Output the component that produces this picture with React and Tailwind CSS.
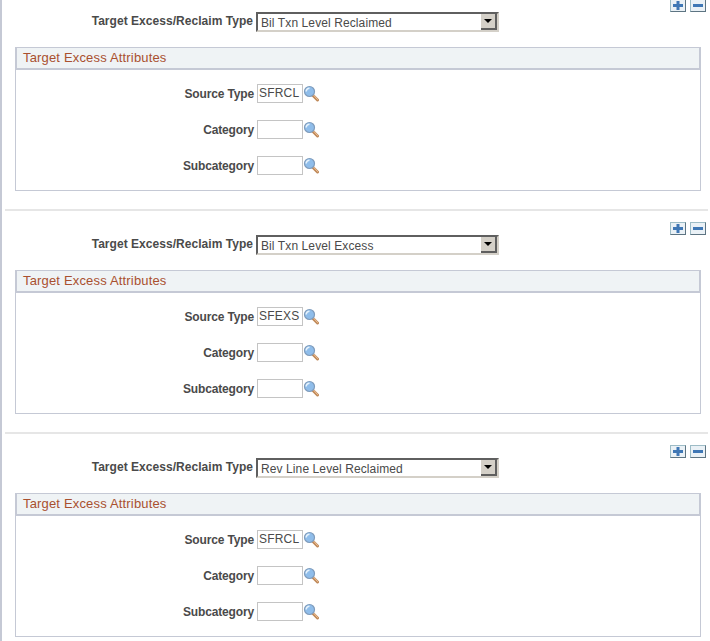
import React from 'react';

const sections = [
    { type: 'Bil Txn Level Reclaimed', source: 'SFRCL' },
    { type: 'Bil Txn Level Excess', source: 'SFEXS' },
    { type: 'Rev Line Level Reclaimed', source: 'SFRCL' },
];

const Lookup = () => (
    <svg width="16" height="17" viewBox="0 0 16 17" className="shrink-0">
        <path d="M10 10.5 L14.5 15" stroke="#c08a5a" strokeWidth="3" strokeLinecap="round" />
        <path d="M10.5 10 L14.5 14.5" stroke="#f0c49a" strokeWidth="1" strokeLinecap="round" />
        <circle cx="6.5" cy="6.5" r="5" fill="#8fbdea" stroke="#7f9cbc" strokeWidth="1.2" />
        <path d="M3.2 6.5 A3.3 3.3 0 0 1 6.5 3.2" fill="none" stroke="#e6f2fc" strokeWidth="1.6" />
    </svg>
);

const RowButton = ({ minus }) => (
    <div className="w-[16px] h-[13px] flex items-center justify-center bg-[#eaf1f6] border border-[#9dbcc6] border-r-[#5d7482] border-b-[#5d7482]">
        <svg width="12" height="11" viewBox="0 0 12 11">
            {!minus && <rect x="4.5" y="1" width="3" height="9" fill="#3f77b5" />}
            <rect x="1" y="4" width="10" height="3" fill="#3f77b5" />
        </svg>
    </div>
);

const Field = ({ label, value }) => (
    <div className="flex items-center h-[19px]">
        <span className="w-[241px] text-right font-bold text-[12px] tracking-[-0.15px] text-[#4a4a4a] pr-[3px]">{label}</span>
        <div className="w-[46px] h-[19px] border border-[#c4c4c4] bg-white text-[12px] text-[#4a4a4a] leading-[17px] pl-[1px] tracking-[0.2px] overflow-hidden">
            {value}
        </div>
        <Lookup />
    </div>
);

const Section = ({ type, source, last }) => (
    <div className={last ? 'pt-[10px]' : 'pt-[10px] pb-[18px]'}>
        <div className="flex justify-end items-end gap-[4px] pr-[2px] h-[14px]">
            <RowButton />
            <RowButton minus />
        </div>
        <div className="flex items-center h-[20px]">
            <span className="w-[251px] text-right font-bold text-[12px] tracking-[0.04px] text-[#4a4a4a] pr-[3px] -mt-[2px]">Target Excess/Reclaim Type</span>
            <div className="w-[243px] h-[20px] flex border-2 border-[#5f5f5f] border-r-[#d4d0c8] border-b-[#d4d0c8] bg-white">
                <span className="flex-1 text-[12px] leading-[18px] pl-[3px] text-[#4a4a4a] tracking-[0.1px]">{type}</span>
                <div className="w-[16px] h-[16px] bg-[#d4d0c8] border-r-2 border-b-2 border-[#5f5f5f] flex items-center justify-center">
                    <div className="w-0 h-0 border-x-[4px] border-x-transparent border-t-[4px] border-t-black" />
                </div>
            </div>
        </div>
        <div className="ml-[10px] mr-[7px] mt-[15px] h-[144px] border border-[#c5c9d5]">
            <div className="h-[22px] bg-[#eff3f5] border-b-2 border-l border-r-2 border-[#c5c9d5] -mr-[1px] pl-[6px] text-[13px] leading-[19px] text-[#a9502f] tracking-[0.17px]">
                Target Excess Attributes
            </div>
            <div className="flex flex-col gap-[17px] pt-[14px]">
                <Field label="Source Type" value={source} />
                <Field label="Category" />
                <Field label="Subcategory" />
            </div>
        </div>
    </div>
);

const App = () => (
    <div className="w-[710px] h-[641px] overflow-hidden bg-white" style={{ fontFamily: '"Liberation Sans", Arial, sans-serif' }}>
        <div className="-mt-[12px] h-[653px] border-l-2 border-[#c5c9d5] pl-[3px] pr-[2px] overflow-hidden">
            {sections.map((s, i) => (
                <div key={i} className={i > 0 ? 'border-t-2 border-[#e6e6e6]' : ''}>
                    <Section type={s.type} source={s.source} last={i === 2} />
                </div>
            ))}
        </div>
    </div>
);

export default App;
